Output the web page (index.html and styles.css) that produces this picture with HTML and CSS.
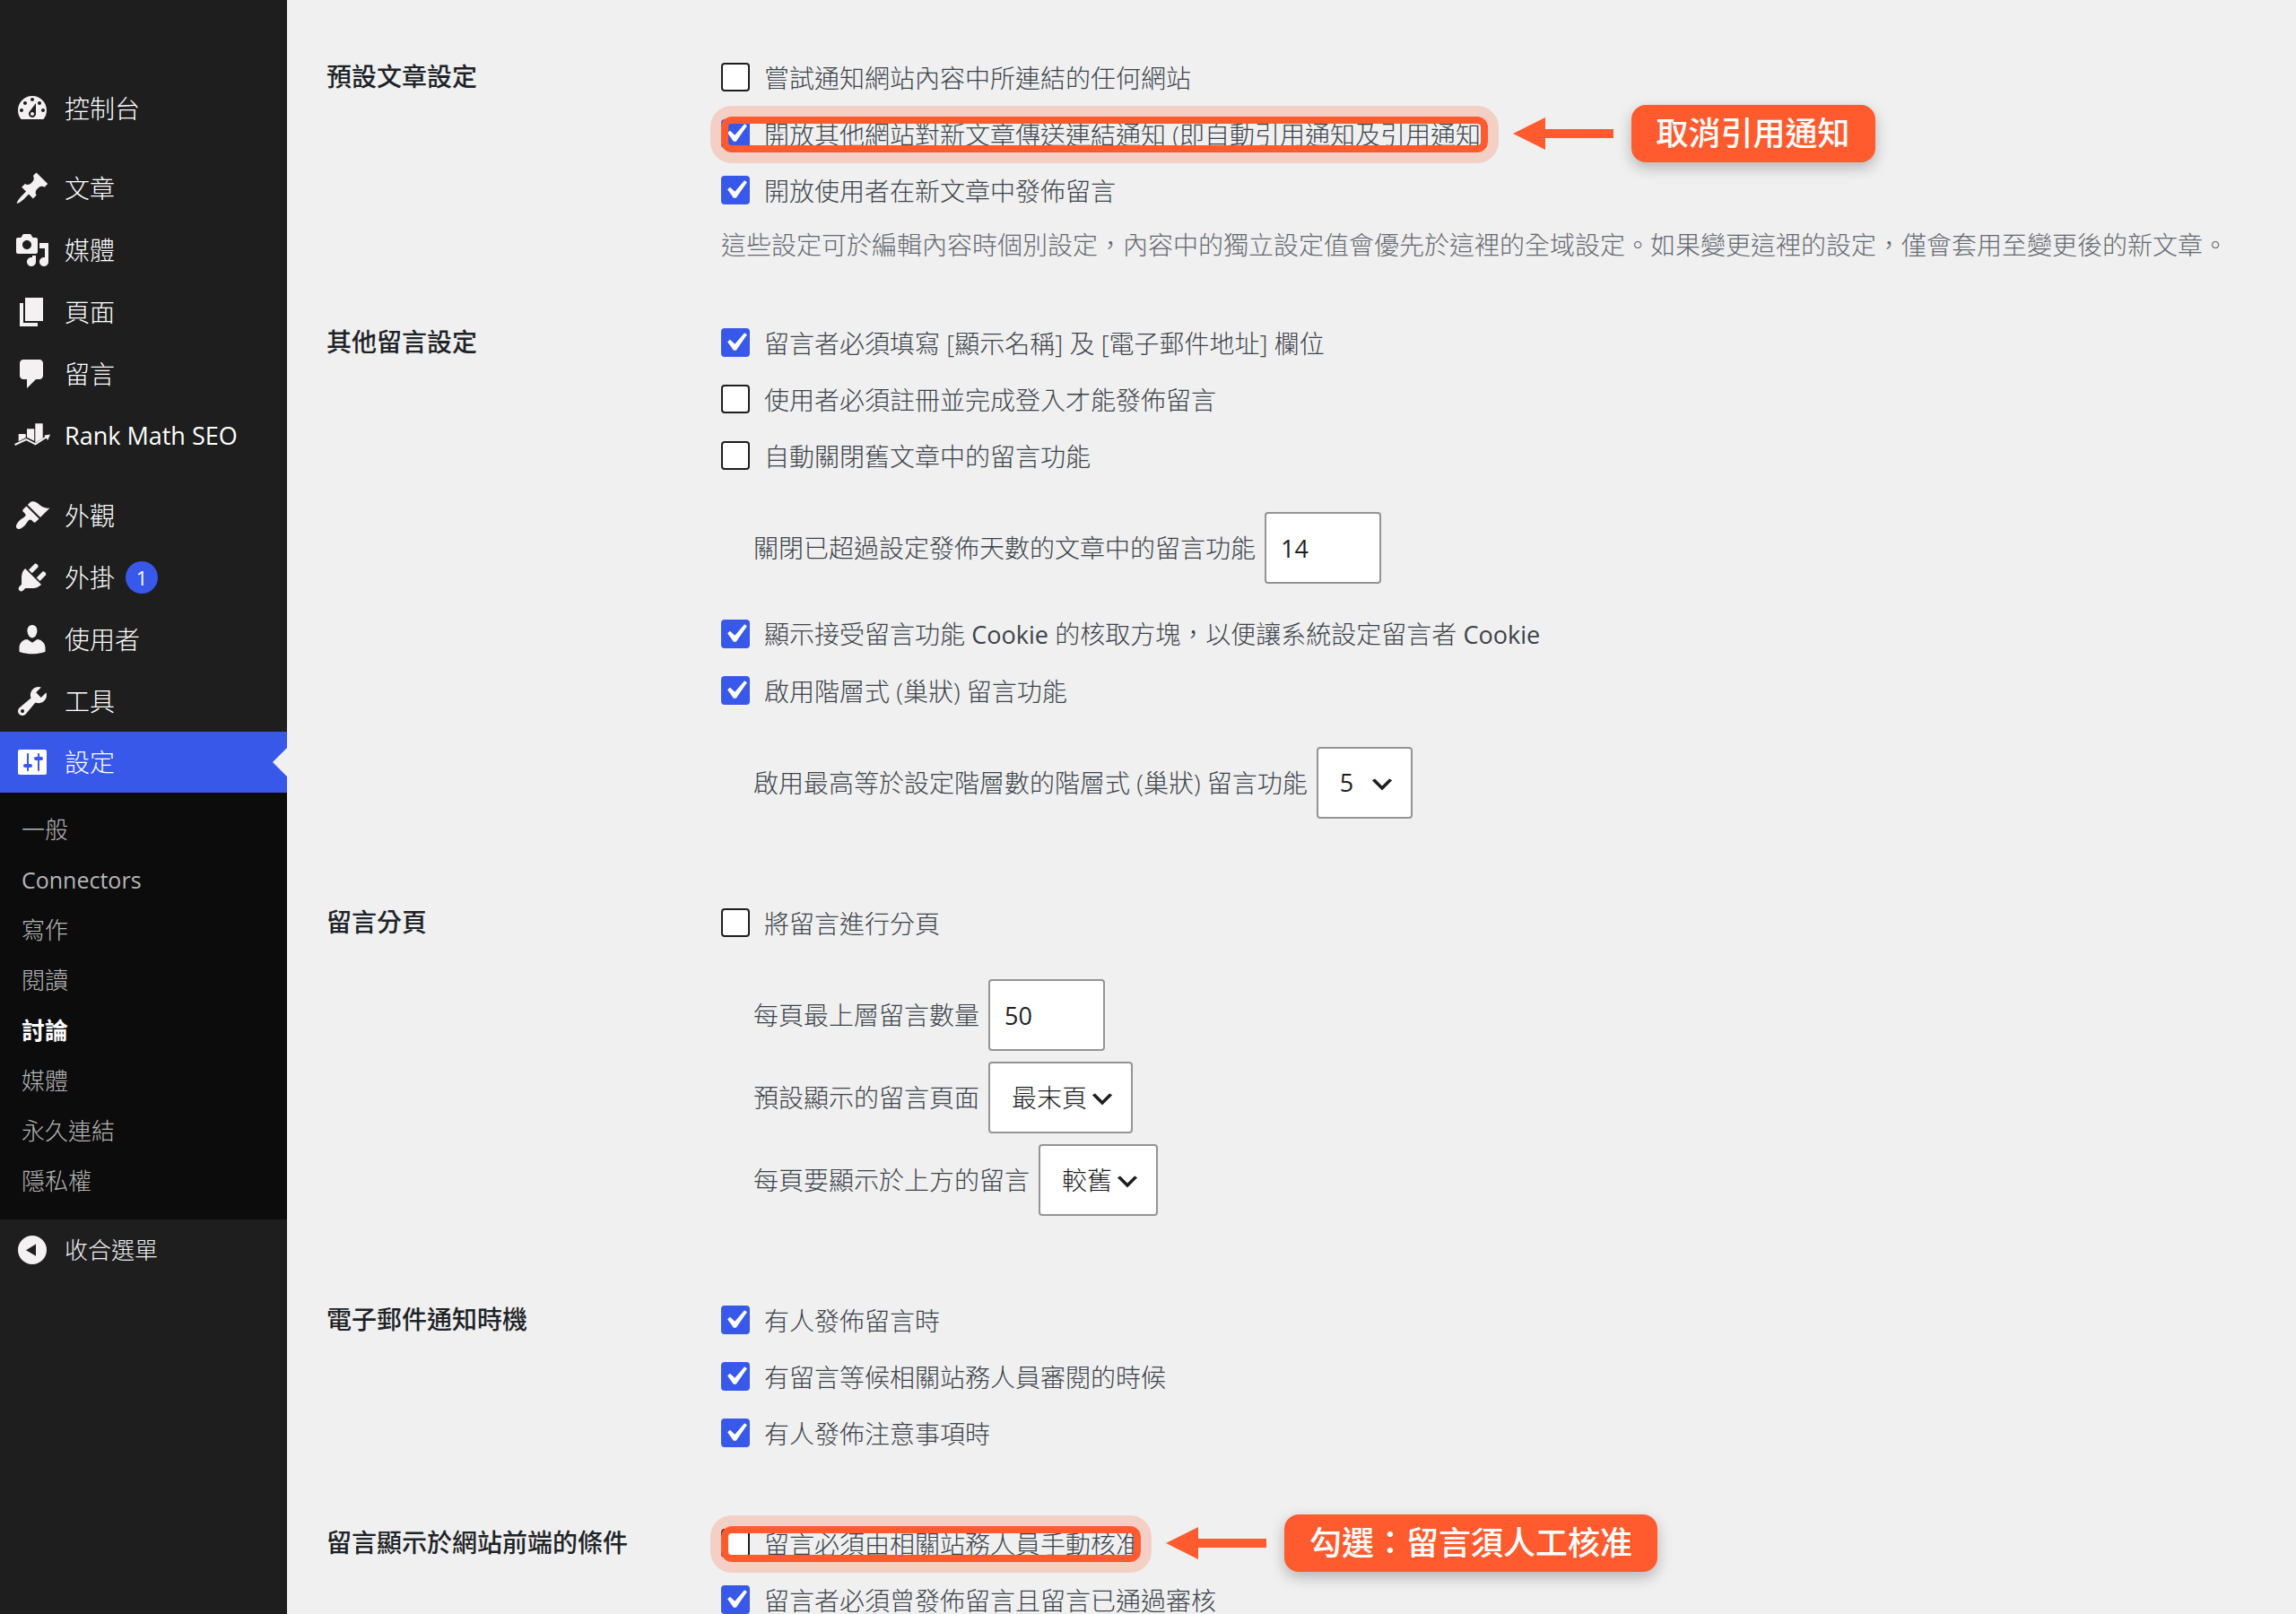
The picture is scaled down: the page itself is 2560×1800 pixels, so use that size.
FILE: index.html
```html
<!DOCTYPE html>
<html lang="zh-Hant-TW">
<head>
<meta charset="utf-8">
<meta name="viewport" content="width=device-width, initial-scale=1">
<title>討論設定</title>
<link rel="stylesheet" href="styles.css">
</head>
<body>
<div class="layout">
  <nav class="sidebar" aria-label="主選單">
    <ul class="menu">
      <li><a class="menu-link" href="#"><svg class="icon" viewBox="0 0 20 20"><path d="M3.76 16h12.48c1.1-1.37 1.76-3.11 1.76-5 0-4.42-3.58-8-8-8s-8 3.58-8 8c0 1.89.66 3.63 1.76 5zM10 4c.55 0 1 .45 1 1s-.45 1-1 1-1-.45-1-1 .45-1 1-1zM6 6c.55 0 1 .45 1 1s-.45 1-1 1-1-.45-1-1 .45-1 1-1zm8 0c.55 0 1 .45 1 1s-.45 1-1 1-1-.45-1-1 .45-1 1-1zm-5.37 5.55L12 7v6c0 1.1-.9 2-2 2s-2-.9-2-2c0-.57.24-1.08.63-1.45zM4 10c.55 0 1 .45 1 1s-.45 1-1 1-1-.45-1-1 .45-1 1-1zm12 0c.55 0 1 .45 1 1s-.45 1-1 1-1-.45-1-1 .45-1 1-1zm-5 3c0-.55-.45-1-1-1s-1 .45-1 1 .45 1 1 1 1-.45 1-1z" fill-rule="evenodd"/></svg>控制台</a></li>
      <li class="separated"><a class="menu-link" href="#"><svg class="icon" viewBox="0 0 20 20"><path d="M10.44 3.02l1.82-1.82 6.36 6.35-1.83 1.82c-1.05-.68-2.48-.57-3.41.36l-.75.75c-.92.93-1.04 2.35-.35 3.41l-1.83 1.82-2.41-2.41-2.8 2.79c-.42.42-3.38 2.71-3.8 2.29s1.86-3.39 2.28-3.81l2.79-2.79L4.1 9.36l1.83-1.82c1.05.69 2.48.57 3.4-.36l.75-.75c.93-.92 1.05-2.35.36-3.41z"/></svg>文章</a></li>
      <li><a class="menu-link" href="#"><svg class="icon" viewBox="0 0 20 20"><path d="M13 11V4c0-.55-.45-1-1-1h-1.67L9 1H5L3.67 3H2c-.55 0-1 .45-1 1v7c0 .55.45 1 1 1h10c.55 0 1-.45 1-1zM7 4.5c1.38 0 2.5 1.12 2.5 2.5S8.38 9.5 7 9.5 4.5 8.38 4.5 7 5.62 4.5 7 4.5zM14 6h5v10.5c0 1.38-1.12 2.5-2.5 2.5S14 17.88 14 16.5s1.12-2.5 2.5-2.5c.17 0 .34.02.5.05V9h-3V6zm-4 8.05V13h2v3.5c0 1.38-1.12 2.5-2.5 2.5S7 17.88 7 16.5 8.12 14 9.5 14c.17 0 .34.02.5.05z" fill-rule="evenodd"/></svg>媒體</a></li>
      <li><a class="menu-link" href="#"><svg class="icon" viewBox="0 0 20 20"><path d="M6 15V2h10v13H6zm-1 1h8v2H3V5h2v11z"/></svg>頁面</a></li>
      <li><a class="menu-link" href="#"><svg class="icon" viewBox="0 0 20 20"><path d="M5 2h9c1.1 0 2 .9 2 2v7c0 1.1-.9 2-2 2h-2l-5 5v-5H5c-1.1 0-2-.9-2-2V4c0-1.1.9-2 2-2z"/></svg>留言</a></li>
      <li><a class="menu-link" href="#"><svg class="icon" viewBox="0 0 40 40"><path d="M4.700 18h8v4.300l-8 3.900zM14 12.300h8.200v13.400L14 21.800zM23.300 6.300h8.400v16.400l-8.400 5.300z"/><path d="M.6 30l12.700-6 10.200 5.400 12.800-8.600" fill="none" stroke="currentColor" stroke-width="2"/><path d="M33.400 19.600l6.600-1.100-2.800 6.400z"/></svg><span class="latin">Rank Math SEO</span></a></li>
      <li class="separated"><a class="menu-link" href="#"><svg class="icon" viewBox="0 0 20 20"><path d="M14.480 11.060L7.410 3.990l1.500-1.500c.5-.56 2.300-.47 3.510.32 1.210.8 1.430 1.280 2.910 2.100 1.180.64 2.450 1.260 4.450.85zm-.71.71L6.700 4.700 4.930 6.470c-.39.39-.39 1.020 0 1.410l1.060 1.060c.39.39.39 1.030 0 1.420-.6.6-1.430 1.110-2.210 1.690-.35.26-.7.53-1.010.84C1.430 14.230.4 16.080 1.400 17.070c.99 1 2.840-.03 4.180-1.360.31-.31.58-.66.85-1.020.57-.78 1.080-1.610 1.690-2.210.39-.39 1.020-.39 1.410 0l1.060 1.060c.39.39 1.020.39 1.410 0z"/></svg>外觀</a></li>
      <li><a class="menu-link" href="#"><svg class="icon" viewBox="0 0 20 20"><path d="M13.110 4.360L9.870 7.600 8 5.730l3.240-3.240c.35-.34 1.050-.2 1.560.32.52.51.66 1.210.31 1.550zm-8 1.770l.91-1.120 9.010 9.010-1.190.84c-.71.71-2.630 1.160-3.820 1.160H6.140L4.900 17.260c-.59.59-1.540.59-2.120 0-.59-.58-.59-1.530 0-2.120l1.240-1.240v-3.880c0-1.130.4-3.190 1.090-3.890zm7.260 3.970l3.240-3.240c.34-.35 1.040-.21 1.550.31.52.51.66 1.210.31 1.550l-3.240 3.250z"/></svg>外掛<span class="count">1</span></a></li>
      <li><a class="menu-link" href="#"><svg class="icon" viewBox="0 0 20 20"><path d="M10 9.250c-2.270 0-2.730-3.440-2.730-3.440C7 4.020 7.820 2 9.970 2c2.160 0 2.980 2.020 2.710 3.810 0 0-.41 3.440-2.680 3.440zm0 2.570L12.720 10c2.390 0 4.520 2.330 4.520 4.530v2.490s-3.650 1.130-7.240 1.130c-3.650 0-7.240-1.130-7.240-1.130v-2.490c0-2.250 1.940-4.480 4.470-4.480z"/></svg>使用者</a></li>
      <li><a class="menu-link" href="#"><svg class="icon" viewBox="0 0 20 20"><path d="M16.680 9.770c-1.340 1.340-3.300 1.670-4.950.99l-5.410 6.520c-.99.99-2.590.99-3.580 0s-.99-2.590 0-3.570l6.520-5.420c-.68-1.650-.35-3.610.99-4.950 1.280-1.280 3.120-1.620 4.720-1.060l-2.890 2.890 2.820 2.820 2.860-2.870c.53 1.580.18 3.390-1.080 4.650zM3.810 16.210c.4.390 1.040.39 1.430 0 .4-.4.4-1.040 0-1.430-.39-.4-1.030-.4-1.430 0-.39.39-.39 1.030 0 1.430z" fill-rule="evenodd"/></svg>工具</a></li>
      <li>
        <a class="menu-link current" href="#" aria-current="true"><svg class="icon" viewBox="0 0 20 20"><path d="M18 16V4c0-.55-.45-1-1-1H3c-.55 0-1 .45-1 1v12c0 .55.45 1 1 1h14c.55 0 1-.45 1-1zM8 11h1c.55 0 1 .45 1 1s-.45 1-1 1H8v1.500c0 .28-.22.5-.5.5s-.5-.22-.5-.5V13H6c-.55 0-1-.45-1-1s.45-1 1-1h1V5.500c0-.28.22-.5.5-.5s.5.22.5.5V11zm5-2h-1c-.55 0-1-.45-1-1s.45-1 1-1h1V5.500c0-.28.22-.5.5-.5s.5.22.5.5V7h1c.55 0 1 .45 1 1s-.45 1-1 1h-1v5.500c0 .28-.22.5-.5.5s-.5-.22-.5-.5V9z" fill-rule="evenodd"/></svg>設定</a>
        <ul class="submenu">
          <li><a href="#">一般</a></li>
          <li><a class="latin" href="#">Connectors</a></li>
          <li><a href="#">寫作</a></li>
          <li><a href="#">閱讀</a></li>
          <li><a class="active" href="#" aria-current="page">討論</a></li>
          <li><a href="#">媒體</a></li>
          <li><a href="#">永久連結</a></li>
          <li><a href="#">隱私權</a></li>
        </ul>
      </li>
    </ul>
    <button class="collapse" type="button"><svg class="icon" viewBox="0 0 20 20"><path d="M10 2a8 8 0 1 0 0 16 8 8 0 0 0 0-16zM12 6.800v6.600L6.500 10.100z" fill-rule="evenodd"/></svg>收合選單</button>
  </nav>

  <main class="content">
    <form class="settings">
      <section class="setting" aria-labelledby="h-post">
        <h2 class="setting-title" id="h-post">預設文章設定</h2>
        <div>
          <div class="row"><label class="check"><input type="checkbox"><span>嘗試通知網站內容中所連結的任何網站</span></label></div>
          <div class="row">
            <label class="check highlight"><input type="checkbox" checked><span>開放其他網站對新文章傳送連結通知 (即自動引用通知及引用通知)</span></label>
            <div class="callout">
              <svg class="arrow" viewBox="0 0 112 36"><path d="M0 18L36 0v13h76v10H36v13z"/></svg>
              <strong class="callout-text">取消引用通知</strong>
            </div>
          </div>
          <div class="row"><label class="check"><input type="checkbox" checked><span>開放使用者在新文章中發佈留言</span></label></div>
          <p class="description">這些設定可於編輯內容時個別設定，內容中的獨立設定值會優先於這裡的全域設定。如果變更這裡的設定，僅會套用至變更後的新文章。</p>
        </div>
      </section>

      <section class="setting" aria-labelledby="h-other">
        <h2 class="setting-title" id="h-other">其他留言設定</h2>
        <div>
          <div class="row"><label class="check"><input type="checkbox" checked><span>留言者必須填寫 [顯示名稱] 及 [電子郵件地址] 欄位</span></label></div>
          <div class="row"><label class="check"><input type="checkbox"><span>使用者必須註冊並完成登入才能發佈留言</span></label></div>
          <div class="row"><label class="check"><input type="checkbox"><span>自動關閉舊文章中的留言功能</span></label></div>
          <div class="suboptions">
            <div class="field"><label for="close-days">關閉已超過設定發佈天數的文章中的留言功能</label><input class="number" id="close-days" type="number" value="14"></div>
          </div>
          <div class="row"><label class="check"><input type="checkbox" checked><span>顯示接受留言功能 <b class="latin">Cookie</b> 的核取方塊，以便讓系統設定留言者 <b class="latin">Cookie</b></span></label></div>
          <div class="row"><label class="check"><input type="checkbox" checked><span>啟用階層式 (巢狀) 留言功能</span></label></div>
          <div class="suboptions">
            <div class="field"><label for="depth">啟用最高等於設定階層數的階層式 (巢狀) 留言功能</label><select class="select latin" id="depth"><option>2</option><option>3</option><option>4</option><option selected>5</option><option>6</option><option>7</option><option>8</option><option>9</option><option>10</option></select></div>
          </div>
        </div>
      </section>

      <section class="setting" aria-labelledby="h-paging">
        <h2 class="setting-title" id="h-paging">留言分頁</h2>
        <div>
          <div class="row"><label class="check"><input type="checkbox"><span>將留言進行分頁</span></label></div>
          <div class="suboptions">
            <div class="field"><label for="per-page">每頁最上層留言數量</label><input class="number" id="per-page" type="number" value="50"></div>
            <div class="field"><label for="default-page">預設顯示的留言頁面</label><select class="select" id="default-page"><option selected>最末頁</option><option>最前頁</option></select></div>
            <div class="field"><label for="order">每頁要顯示於上方的留言</label><select class="select" id="order"><option selected>較舊</option><option>較新</option></select></div>
          </div>
        </div>
      </section>

      <section class="setting" aria-labelledby="h-mail">
        <h2 class="setting-title" id="h-mail">電子郵件通知時機</h2>
        <div>
          <div class="row"><label class="check"><input type="checkbox" checked><span>有人發佈留言時</span></label></div>
          <div class="row"><label class="check"><input type="checkbox" checked><span>有留言等候相關站務人員審閱的時候</span></label></div>
          <div class="row"><label class="check"><input type="checkbox" checked><span>有人發佈注意事項時</span></label></div>
        </div>
      </section>

      <section class="setting" aria-labelledby="h-show">
        <h2 class="setting-title" id="h-show">留言顯示於網站前端的條件</h2>
        <div>
          <div class="row">
            <label class="check highlight"><input type="checkbox"><span>留言必須由相關站務人員手動核准</span></label>
            <div class="callout">
              <svg class="arrow" viewBox="0 0 112 36"><path d="M0 18L36 0v13h76v10H36v13z"/></svg>
              <strong class="callout-text">勾選：留言須人工核准</strong>
            </div>
          </div>
          <div class="row"><label class="check"><input type="checkbox" checked><span>留言者必須曾發佈留言且留言已通過審核</span></label></div>
        </div>
      </section>
    </form>
  </main>
</div>
</body>
</html>
```
FILE: styles.css
```css
:root {
  --blue: #3858e9;
  --orange: #ff5b2e;
  --page: #f0f0f0;
}

*,
*::before,
*::after {
  box-sizing: border-box;
}

body {
  margin: 0;
  background: var(--page);
  color: #3c434a;
  font-family: "Open Sans", "Noto Sans CJK TC", sans-serif;
  font-size: 28px;
  font-weight: 300;
  line-height: 40px;
}

ul {
  margin: 0;
  padding: 0;
  list-style: none;
}

input,
select,
button {
  font: inherit;
}

.layout {
  display: grid;
  grid-template-columns: 320px minmax(0, 1fr);
  min-height: 100vh;
}

.latin {
  font-size: 27px;
  font-weight: 400;
}

/* Sidebar */

.sidebar {
  padding-top: 86px;
  background: #1e1e1e;
  color: #fff;
}

.menu-link {
  position: relative;
  display: flex;
  align-items: center;
  gap: 16px;
  height: 69px;
  padding-left: 16px;
  color: #fff;
  text-decoration: none;
}

.separated {
  margin-top: 20px;
}

.icon {
  flex: none;
  width: 40px;
  height: 40px;
  color: #f3f1f1;
  fill: currentColor;
}

.current {
  height: 68px;
  background: var(--blue);
}

.current .icon {
  color: #fff;
}

.current::after {
  content: "";
  position: absolute;
  top: 50%;
  right: 0;
  border: 16px solid transparent;
  border-left-width: 0;
  border-right-color: var(--page);
  transform: translateY(-50%);
}

.count {
  width: 36px;
  margin-left: -4px;
  border-radius: 18px;
  background: var(--blue);
  font-size: 22px;
  font-weight: 400;
  line-height: 36px;
  text-align: center;
}

.submenu {
  padding: 13px 0 15px;
  background: #0c0c0c;
}

.submenu a {
  display: block;
  padding: 8px 24px;
  color: #b6b6b6;
  font-size: 26px;
  text-decoration: none;
}

.submenu .latin {
  font-size: 25px;
}

.submenu .active {
  color: #fff;
  font-weight: 700;
}

.collapse {
  display: flex;
  align-items: center;
  gap: 16px;
  width: 100%;
  height: 68px;
  padding: 0 16px;
  border: 0;
  background: none;
  color: #f0f0f1;
  font-size: 26px;
}

/* Settings form */

.content {
  padding: 54px 44px 0;
}

.settings {
  display: flex;
  flex-direction: column;
  gap: 60px;
}

.setting {
  display: grid;
  grid-template-columns: 440px minmax(0, 1fr);
}

.setting-title {
  margin: 0;
  color: #1d2327;
  font-size: 28px;
  font-weight: 500;
  line-height: 62px;
}

.row {
  display: flex;
  align-items: center;
  height: 63px;
  white-space: nowrap;
}

.check {
  display: flex;
  align-items: center;
  gap: 16px;
}

.check > span {
  padding-top: 2px;
}

.check input {
  flex: none;
  width: 32px;
  height: 32px;
  margin: 0;
  border: 2px solid #1e1e1e;
  border-radius: 4px;
  background: #fff;
  appearance: none;
}

.check input:checked {
  border-color: var(--blue);
  background: var(--blue) url("data:image/svg+xml,%3Csvg xmlns='http://www.w3.org/2000/svg' viewBox='0 0 20 20'%3E%3Cpath d='M14.830 4.890l1.340.94-5.810 8.380H9.020L5.780 9.670l1.340-1.250 2.570 2.400z' fill='%23fff'/%3E%3C/svg%3E") center / 42px no-repeat;
}

.description {
  margin: 13px 0 0;
  color: #646970;
  line-height: 34px;
}

.suboptions {
  display: flex;
  flex-direction: column;
  gap: 12px;
  margin: 32px 0 24px;
  padding-left: 36px;
}

.field {
  display: flex;
  align-items: center;
  gap: 10px;
}

.number,
.select {
  height: 80px;
  border: 2px solid #949494;
  border-radius: 4px;
  background: #fff;
  color: #1e1e1e;
}

.number {
  width: 130px;
  padding: 0 16px;
  font-size: 27px;
  font-weight: 400;
}

.select {
  padding: 0 48px 0 24px;
  background: #fff url("data:image/svg+xml,%3Csvg xmlns='http://www.w3.org/2000/svg' viewBox='0 0 20 20'%3E%3Cpath d='M5 6l5 5 5-5 2 1-7 7-7-7 2-1z' fill='%231e1e1e'/%3E%3C/svg%3E") right 16px top 55% / 32px no-repeat;
  appearance: none;
}

/* Annotations */

.highlight {
  position: relative;
}

.highlight::after {
  content: "";
  position: absolute;
  top: 2px;
  right: 0;
  left: 0;
  height: 40px;
  border: 8px solid var(--orange);
  border-radius: 12px;
  box-shadow: 0 0 0 12px rgba(255, 91, 46, 0.22);
  pointer-events: none;
}

.callout {
  display: flex;
  align-items: center;
  gap: 20px;
  margin-left: 28px;
}

.arrow {
  width: 112px;
  height: 36px;
  fill: var(--orange);
}

.callout-text {
  padding: 0 28px;
  border-radius: 16px;
  background: var(--orange);
  box-shadow: 0 6px 16px rgba(0, 0, 0, 0.25);
  color: #fff;
  font-size: 36px;
  font-weight: 500;
  line-height: 64px;
}
```
